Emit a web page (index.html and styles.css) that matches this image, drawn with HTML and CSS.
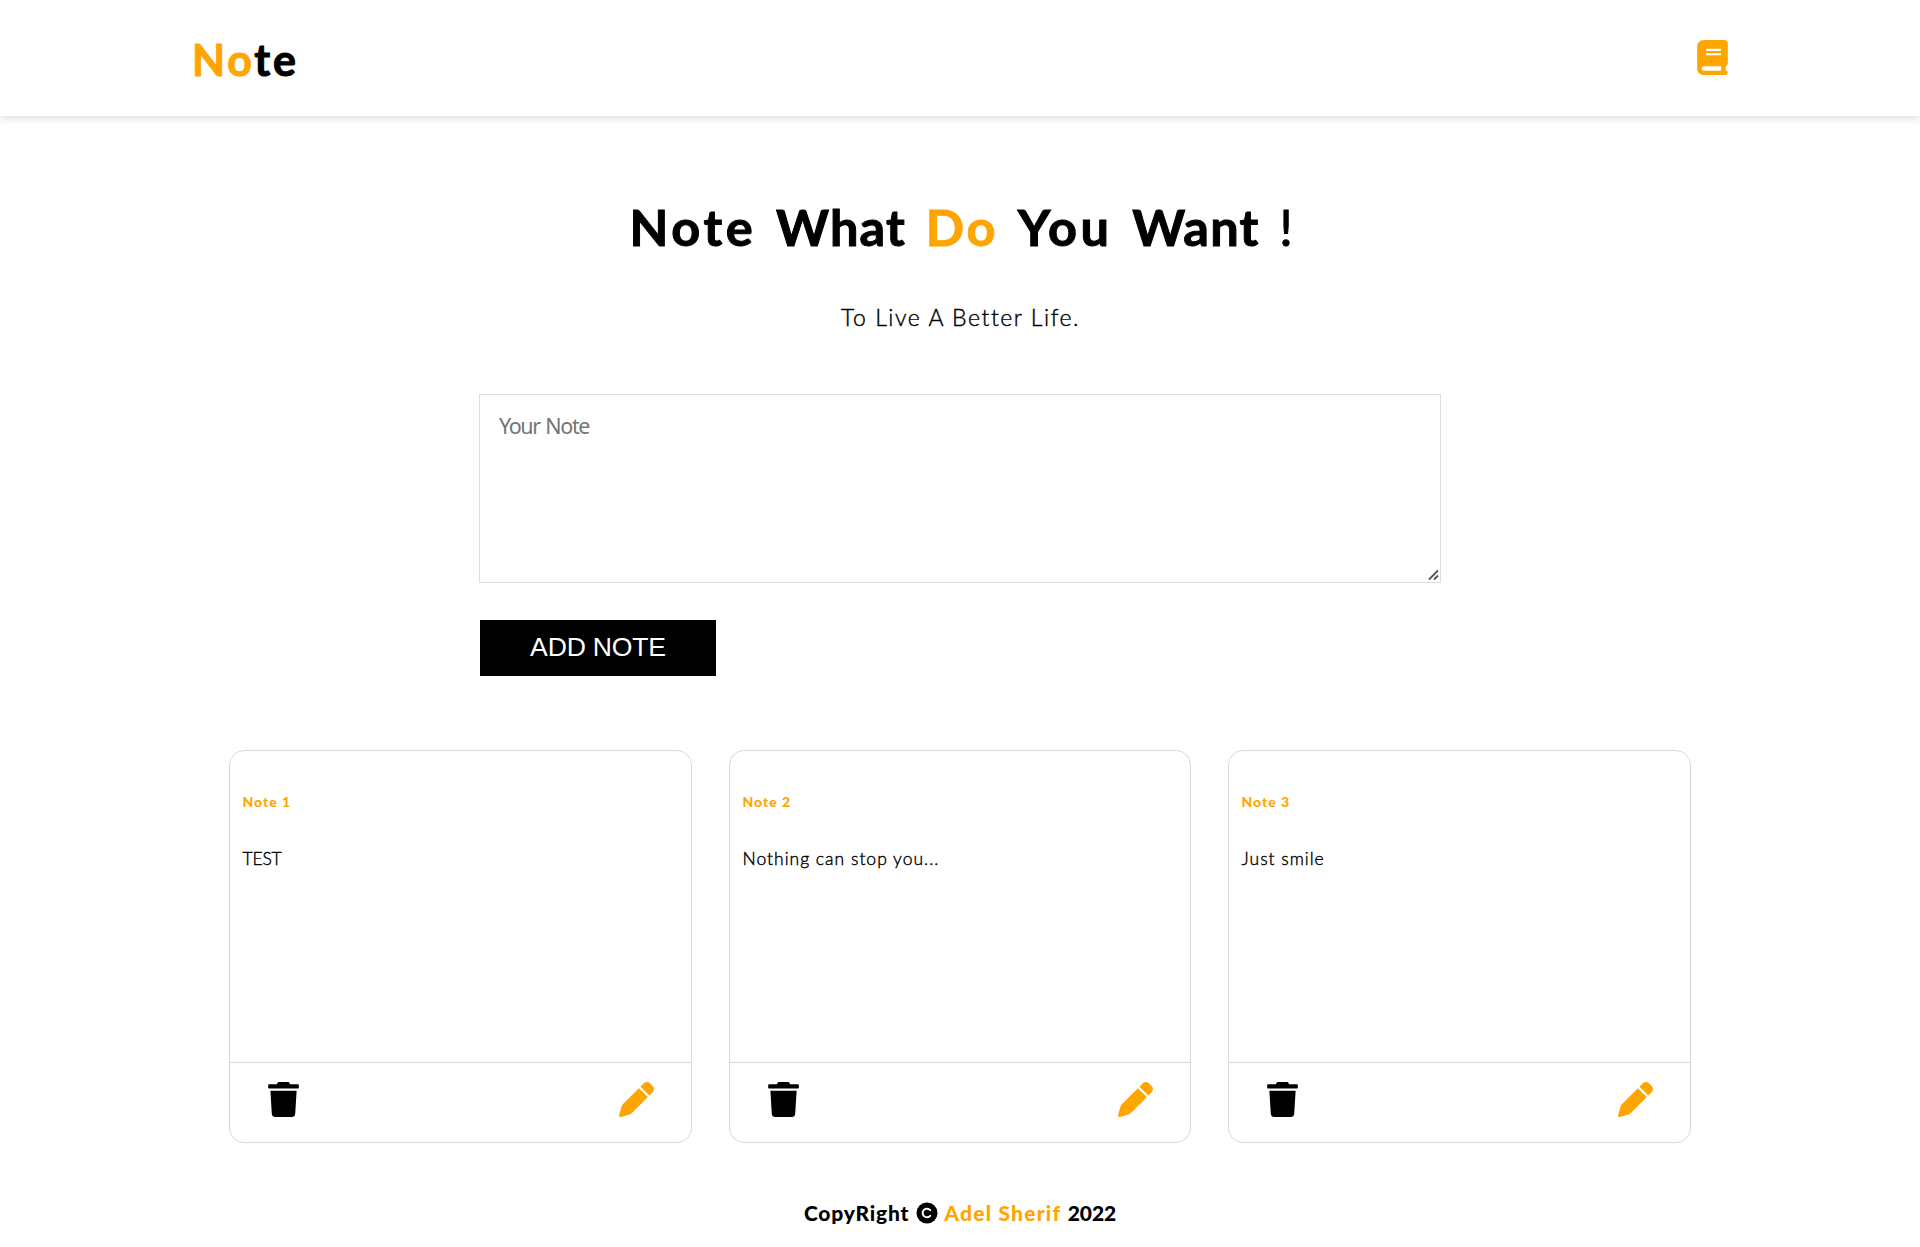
FILE: index.html
```html
<!DOCTYPE html>
<html lang="en">
<head>
<meta charset="utf-8">
<title>Note</title>
<link rel="stylesheet" href="styles.css">
</head>
<body>
<svg class="sprite" aria-hidden="true">
  <symbol id="book" viewBox="0 0 448 512"><path d="M448 336v-288C448 21.49 426.5 0 400 0H96C42.98 0 0 42.98 0 96v320c0 53.02 42.98 96 96 96h320c17.67 0 32-14.33 32-31.1c0-11.72-6.607-21.52-16-27.1v-81.36C441.8 362.8 448 350.2 448 336zM143.1 128h192C344.8 128 352 135.2 352 144C352 152.8 344.8 160 336 160H143.1C135.2 160 128 152.8 128 144C128 135.2 135.2 128 143.1 128zM143.1 192h192C344.8 192 352 199.2 352 208C352 216.8 344.8 224 336 224H143.1C135.2 224 128 216.8 128 208C128 199.2 135.2 192 143.1 192zM352 448H96c-17.67 0-32-14.33-32-32c0-17.67 14.33-32 32-32h256V448zM432 384v64h-16v-64z"/></symbol>
  <symbol id="trash" viewBox="0 0 448 512"><path d="M53.21 467c1.562 24.84 23.02 45 47.9 45h245.8c24.88 0 46.33-20.16 47.9-45L416 128H32L53.21 467zM432 32H320l-11.58-23.16c-2.709-5.42-8.25-8.844-14.31-8.844H153.9c-6.061 0-11.6 3.424-14.31 8.844L128 32H16c-8.836 0-16 7.162-16 16V80c0 8.836 7.164 16 16 16h416c8.838 0 16-7.164 16-16V48C448 39.16 440.8 32 432 32z"/></symbol>
  <symbol id="pen" viewBox="0 0 512 512"><path d="M362.7 19.32C387.7-5.678 428.3-5.678 453.3 19.32L492.7 58.75C517.7 83.74 517.7 124.3 492.7 149.3L444.3 197.7L314.3 67.72L362.7 19.32zM421.7 220.3L188.5 453.4C178.1 463.8 165.2 471.5 151.1 475.6L30.77 511C22.35 513.5 13.24 511.2 7.03 504.1C.8198 498.8-1.502 489.7 .976 481.2L36.37 360.9C40.53 346.8 48.16 333.9 58.57 323.5L291.7 90.34L421.7 220.3z"/></symbol>
</svg>
<header class="header">
  <div class="logo"><span class="accent">No</span>te</div>
  <svg class="icon-book"><use href="#book"/></svg>
</header>
<main>
  <h1 class="title"><span class="wide">Note</span> <span class="tight">What</span> <span class="accent">Do</span> <span class="loose">You</span> <span class="tight">Want</span> <span class="bang">!</span></h1>
  <p class="subtitle">To Live A Better Life.</p>
  <form class="form">
    <div class="field">
      <textarea class="input" placeholder="Your Note"></textarea>
      <svg class="grip" viewBox="0 0 12 12"><path d="M1 10.5L10 1.5M6 10.5L10 6.5"/></svg>
    </div>
    <button class="add" type="button">ADD NOTE</button>
  </form>
  <section class="notes">
    <article class="card">
      <div class="body"><h5 class="name">Note 1</h5><p class="text caps">TEST</p></div>
      <div class="actions"><svg class="icon-trash"><use href="#trash"/></svg><svg class="icon-pen"><use href="#pen"/></svg></div>
    </article>
    <article class="card">
      <div class="body"><h5 class="name">Note 2</h5><p class="text">Nothing can stop you...</p></div>
      <div class="actions"><svg class="icon-trash"><use href="#trash"/></svg><svg class="icon-pen"><use href="#pen"/></svg></div>
    </article>
    <article class="card">
      <div class="body"><h5 class="name">Note 3</h5><p class="text">Just smile</p></div>
      <div class="actions"><svg class="icon-trash"><use href="#trash"/></svg><svg class="icon-pen"><use href="#pen"/></svg></div>
    </article>
  </section>
</main>
<footer class="footer">
  <span>CopyRight</span>
  <svg class="icon-copy" viewBox="0 0 22 22"><circle cx="11" cy="11" r="10.5"/><path d="M14.2 8.2A4.3 4.3 0 1 0 14.2 13.8" fill="none" stroke="#fff" stroke-width="2" stroke-linecap="round"/></svg>
  <span class="accent author">Adel Sherif</span>
  <span class="year">2022</span>
</footer>
</body>
</html>
```
FILE: styles.css
```css
* { box-sizing: border-box; }
body { margin: 0; height: 1247px; overflow: hidden; background: #fff; color: #000; font-family: Lato, "Open Sans", sans-serif; }
svg { display: block; fill: currentColor; }
.sprite { display: none; }
.accent { color: orange; }

.header { display: flex; justify-content: space-between; align-items: flex-start; height: 116px; padding: 0 192px; box-shadow: 0 0 10px rgba(0, 0, 0, .2); }
.logo { margin-top: 35px; font-size: 43px; line-height: 50px; font-weight: 700; letter-spacing: 2.8px; -webkit-text-stroke: 1px currentColor; }
.icon-book { width: 31px; height: 35px; margin-top: 40px; color: orange; }

.title { margin: 81px 0 0; padding-left: 5px; text-align: center; font-size: 50.5px; line-height: 60px; font-weight: 700; letter-spacing: 2.5px; word-spacing: 5px; -webkit-text-stroke: 1px currentColor; white-space: nowrap; }
.wide { letter-spacing: 3.6px; }
.tight { letter-spacing: 1.2px; }
.loose { letter-spacing: 3.4px; }
.bang { font-weight: 400; }
.subtitle { margin: 45px 0 0; padding-left: 1px; text-align: center; font-size: 23px; line-height: 30px; font-weight: 300; letter-spacing: 1.55px; -webkit-text-stroke: .4px currentColor; }

.form { display: flex; flex-direction: column; align-items: flex-start; width: 962px; margin: 62px 0 0 479px; }
.field { position: relative; display: flex; }
.input { width: 962px; height: 189px; padding: 16px 19px; border: 1px solid #ddd; font: 21.5px/30px "Noto Sans", sans-serif; letter-spacing: -1.4px; word-spacing: 1.5px; outline: 0; resize: none; }
.input::placeholder { color: #757575; }
.grip { position: absolute; right: 1px; bottom: 2px; width: 12px; height: 12px; fill: none; stroke: #555; stroke-width: 1.8; }
.add { width: 236px; height: 56px; margin: 37px 0 0 1px; padding: 0 0 2px; border: 0; background: #000; color: #fff; font: 26.6px "Liberation Sans", Arial, sans-serif; letter-spacing: -.2px; }

.notes { display: grid; grid-template-columns: 463px 462px 463px; gap: 37px; margin: 74px 0 0 229px; }
.card { display: flex; flex-direction: column; height: 393px; border: 1px solid #d9d9d9; border-radius: 15px; }
.body { height: 311px; padding: 42px 12.5px 0; }
.name { margin: 0; font-size: 14px; line-height: 18px; font-weight: 900; letter-spacing: 1px; color: orange; }
.text { margin: 36px 0 0; font-size: 17.5px; line-height: 24px; letter-spacing: 1px; font-weight: 300; -webkit-text-stroke: .4px currentColor; }
.caps { letter-spacing: -.2px; }
.actions { display: flex; justify-content: space-between; flex: 1; border-top: 1px solid #d9d9d9; padding: 19px 37px 0 38px; }
.icon-trash { width: 31px; height: 35px; }
.icon-pen { width: 35px; height: 35px; color: orange; }

.footer { display: flex; justify-content: center; align-items: center; gap: 6.5px; height: 30px; margin-top: 55px; font-size: 21px; line-height: 30px; font-weight: 900; letter-spacing: .8px; }
.author { letter-spacing: 1.2px; }
.year { letter-spacing: -.1px; }
.icon-copy { width: 22px; height: 22px; }
```
